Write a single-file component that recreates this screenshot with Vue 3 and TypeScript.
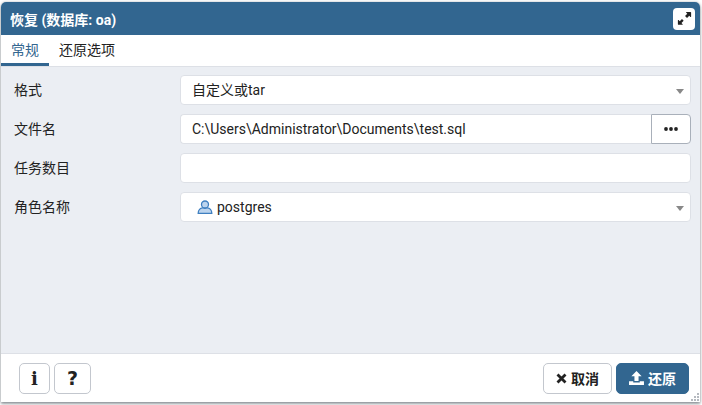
<script setup lang="ts">
const rows = [
  { label: '格式', kind: 'select', value: '自定义或tar' },
  { label: '文件名', kind: 'file', value: 'C:\\Users\\Administrator\\Documents\\test.sql' },
  { label: '任务数目', kind: 'input', value: '' },
  { label: '角色名称', kind: 'role', value: 'postgres' },
]
</script>

<template>
  <div class="page">
    <div class="dialog">
      <header class="titlebar">
        <span class="title">恢复 (数据库: oa)</span>
        <button class="expand" aria-label="expand">
          <svg viewBox="0 0 512 512" width="15" height="15">
            <path fill="#222" d="M448 30H320c-12 0-18 15-10 24l40 40-76 76 68 68 76-76 40 40c9 9 24 2 24-10V54c0-13-11-24-24-24zM170 274l-76 76-40-40c-9-9-24-2-24 10v128c0 13 11 24 24 24h128c12 0 18-15 10-24l-40-40 76-76z"/>
          </svg>
        </button>
      </header>
      <nav class="tabs">
        <span class="tab active">常规</span>
        <span class="tab">还原选项</span>
      </nav>
      <main class="form">
        <div v-for="row in rows" :key="row.label" class="row">
          <label class="label">{{ row.label }}</label>
          <div class="control" :class="{ joined: row.kind === 'file' }">
            <svg v-if="row.kind === 'role'" class="user" viewBox="0 0 16 14" width="16" height="14">
              <circle cx="8" cy="4.500" r="3.500" fill="#bcd4ee" stroke="#3f7fc0" stroke-width="1.300"/>
              <path d="M1.200 13.300c0-3.200 2.200-5.300 4.300-5.500 1.500.8 3.500.8 5 0 2.100.2 4.300 2.300 4.300 5.500z" fill="#bcd4ee" stroke="#3f7fc0" stroke-width="1.300"/>
            </svg>
            <span class="value">{{ row.value }}</span>
            <span v-if="row.kind === 'select' || row.kind === 'role'" class="caret"></span>
          </div>
          <button v-if="row.kind === 'file'" class="browse" aria-label="browse">
            <svg viewBox="0 0 14 4" width="14" height="4">
              <circle cx="2" cy="2" r="1.900" fill="#222"/>
              <circle cx="7" cy="2" r="1.900" fill="#222"/>
              <circle cx="12" cy="2" r="1.900" fill="#222"/>
            </svg>
          </button>
        </div>
      </main>
      <footer class="footer">
        <div class="group">
          <button class="btn square info">i</button>
          <button class="btn square help">?</button>
        </div>
        <div class="group">
          <button class="btn cancel">
            <svg viewBox="0 0 11 11" width="11" height="11">
              <path d="M1.500 1.500l8 8M9.500 1.500l-8 8" stroke="#222" stroke-width="2.800" fill="none"/>
            </svg>
            取消
          </button>
          <button class="btn primary">
            <svg viewBox="0 0 16 15" width="15" height="14">
              <path fill="#fff" d="M8 0l5.500 5.500H10.200V10.800H5.800V5.500H2.500zM0 11h4.500v1.300h7V11H16v4H0z"/>
            </svg>
            还原
          </button>
        </div>
        <svg class="grip" viewBox="0 0 10 10" width="10" height="10">
          <g fill="#b5b9bf">
            <rect x="7" y="1" width="2" height="2"/>
            <rect x="4" y="4" width="2" height="2"/>
            <rect x="7" y="4" width="2" height="2"/>
            <rect x="1" y="7" width="2" height="2"/>
            <rect x="4" y="7" width="2" height="2"/>
            <rect x="7" y="7" width="2" height="2"/>
          </g>
        </svg>
      </footer>
    </div>
  </div>
</template>

<style>
html, body { margin: 0; background: #fff; }
</style>

<style scoped>
.page {
  width: 702px;
  height: 405px;
  padding: 2px 2px 3px 1px;
  box-sizing: border-box;
  overflow: hidden;
  font-family: Roboto, "Noto Sans CJK SC", sans-serif;
  font-size: 14px;
  color: #222;
}
.dialog {
  height: 100%;
  display: flex;
  flex-direction: column;
  background: #fff;
  border-radius: 5px 5px 0 0;
  overflow: hidden;
  box-shadow: 0 0 3px rgba(40, 50, 60, 0.3), 0 2px 3px rgba(40, 50, 60, 0.45);
}
.titlebar {
  height: 33px;
  flex: none;
  display: flex;
  align-items: center;
  justify-content: space-between;
  padding: 0 5px 0 9px;
  background: #326690;
  color: #fff;
  font-weight: 700;
  font-size: 14px;
}
.expand {
  width: 22px;
  height: 22px;
  padding: 0;
  border: 0;
  border-radius: 4px;
  background: #fff;
  display: flex;
  align-items: center;
  justify-content: center;
}
.tabs {
  height: 32px;
  flex: none;
  box-sizing: border-box;
  display: flex;
  background: #fff;
  border-bottom: 1px solid #dde0e6;
}
.tab {
  padding: 0 0 0 10px;
  line-height: 30px;
  color: #222;
}
.tab.active {
  width: 48px;
  height: 31px;
  box-sizing: border-box;
  padding: 0;
  text-align: center;
  color: #326690;
  border-bottom: 3px solid #326690;
}
.form {
  flex: 1;
  background: #ebeef3;
  padding: 8px 9px 0 0;
  display: flex;
  flex-direction: column;
  gap: 9px;
}
.row {
  display: flex;
  height: 30px;
}
.label {
  width: 179px;
  flex: none;
  padding-left: 13px;
  box-sizing: border-box;
  line-height: 31px;
}
.control {
  flex: 1;
  display: flex;
  align-items: center;
  background: #fff;
  border: 1px solid #dde0e6;
  border-radius: 4px;
  padding: 0 11px;
  position: relative;
  min-width: 0;
}
.control.joined {
  border-radius: 4px 0 0 4px;
  border-right: 0;
}
.user { margin: 0 4px 0 5px; }
.value { line-height: 1; }
.caret {
  position: absolute;
  right: 6px;
  top: 13px;
  border-left: 4px solid transparent;
  border-right: 4px solid transparent;
  border-top: 5px solid #888;
}
.browse {
  width: 40px;
  flex: none;
  padding: 0;
  background: #fff;
  border: 1px solid #a9b0ba;
  border-radius: 0 4px 4px 0;
  display: flex;
  align-items: center;
  justify-content: center;
}
.footer {
  height: 49px;
  flex: none;
  box-sizing: border-box;
  border-top: 1px solid #dde0e6;
  background: #fff;
  display: flex;
  justify-content: space-between;
  align-items: center;
  padding: 0 11px 0 18px;
  position: relative;
}
.group {
  display: flex;
  gap: 4px;
}
.btn {
  height: 31px;
  padding: 0;
  border: 1px solid #c3c7ce;
  border-radius: 5px;
  background: #fff;
  color: #222;
  font-family: inherit;
  font-size: 14px;
  font-weight: 700;
  display: flex;
  align-items: center;
  justify-content: center;
  gap: 4px;
}
.info { width: 31px; font-size: 18px; font-family: "DejaVu Serif", serif; }
.help { width: 37px; font-size: 19px; font-family: "DejaVu Sans", sans-serif; }
.cancel { width: 69px; }
.primary {
  width: 73px;
  background: #326690;
  border-color: #326690;
  color: #fff;
}
.grip {
  position: absolute;
  right: 0;
  bottom: 0;
}
</style>
